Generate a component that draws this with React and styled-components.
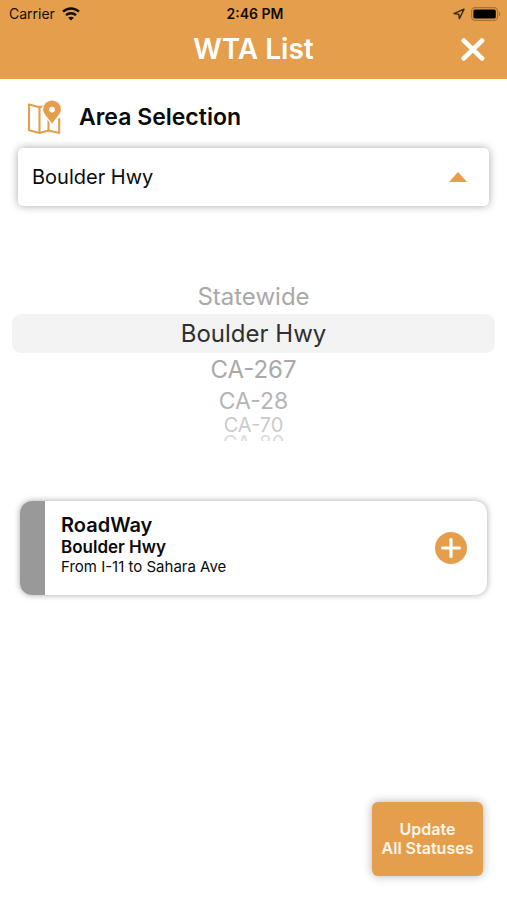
import React, { useState } from 'react';
import styled, { createGlobalStyle } from 'styled-components';

const areas = ['Statewide', 'Boulder Hwy', 'CA-267', 'CA-28', 'CA-70', 'CA-80'];

// how a wheel row looks, by its distance from the selected row
const wheelRows = {
  near: { height: 34, line: 34, size: 24, color: '#a9a9a9' },
  far: { height: 28, line: 28, size: 23, color: '#b4b4b4' },
  farther: { height: 20, line: 20, size: 20, color: '#cbcbcb' },
  // only the top of this row shows, it is rolling out of view
  edge: { height: 6, line: 16, size: 20, color: '#dcdcdc' },
};

const rowFor = (distance) => {
  if (distance <= 1) return wheelRows.near;
  if (distance === 2) return wheelRows.far;
  if (distance === 3) return wheelRows.farther;
  return wheelRows.edge;
};

function WifiIcon() {
  return (
    <svg width="18" height="14" viewBox="0 0 18 14" fill="none" stroke="#120c05" strokeWidth="2.4" aria-hidden="true">
      <path d="M1 4.7C5.6 0.4 12.4 0.4 17 4.7" />
      <path d="M4 8.2C6.8 5.5 11.2 5.5 14 8.2" />
      <path d="M9 13.6L6.2 10.8C7.8 9.3 10.2 9.3 11.8 10.8Z" fill="#120c05" stroke="none" />
    </svg>
  );
}

function LocationIcon() {
  return (
    <svg width="12" height="12" viewBox="0 0 12 12" fill="none" stroke="#3a270f" strokeWidth="1.4" strokeLinejoin="round" aria-hidden="true">
      <path d="M11 1.2L1 5.6L5.8 6.2L6.4 10.6Z" />
    </svg>
  );
}

function BatteryIcon() {
  return (
    <svg width="30" height="14" viewBox="0 0 30 14" aria-hidden="true">
      <rect x="0.6" y="0.6" width="26" height="12.8" rx="3.6" fill="none" stroke="#a5743a" strokeWidth="1.2" />
      <rect x="2.4" y="2.4" width="22.4" height="9.2" rx="1.6" fill="#000" />
      <path d="M28 4.6C29.8 5.4 29.8 8.6 28 9.4Z" fill="#a5743a" />
    </svg>
  );
}

function CloseIcon() {
  return (
    <svg width="26" height="24" viewBox="0 0 26 24" stroke="#fff" strokeWidth="4.8" strokeLinecap="round" aria-hidden="true">
      <path d="M3.8 3.6L22 21.4M22 3.6L3.8 21.4" />
    </svg>
  );
}

function MapIcon() {
  return (
    <svg width="36" height="36" viewBox="0 0 36 36" aria-hidden="true">
      <g fill="none" stroke="#e59f4c" strokeWidth="2.1" strokeLinejoin="round" strokeLinecap="round">
        <path d="M17 6L12.5 7.2L2 4.4V30.2L12.5 33L21.5 30.4L32.2 33V19" />
        <path d="M12.5 7.2V33" />
        <path d="M21.5 30.4V18" />
      </g>
      <path
        d="M25 -0.2A9.6 9.6 0 0 1 34.6 9.4C34.6 15 28.5 18.5 25 25C21.5 18.5 15.4 15 15.4 9.4A9.6 9.6 0 0 1 25 -0.2Z"
        fill="#e59f4c"
        stroke="#fff"
        strokeWidth="1.4"
      />
      <circle cx="25" cy="9.6" r="2.9" fill="#fff" />
    </svg>
  );
}

function AddIcon() {
  return (
    <svg width="32" height="32" viewBox="0 0 32 32" aria-hidden="true">
      <circle cx="16" cy="16" r="16" fill="#e59f4c" />
      <path d="M16 7.6V24.4M7.6 16H24.4" stroke="#fff" strokeWidth="3.2" strokeLinecap="round" />
    </svg>
  );
}

function App() {
  const [area, setArea] = useState('Boulder Hwy');
  const selected = areas.indexOf(area);

  return (
    <>
      <GlobalStyle />
      <Screen>
        <Header>
          <StatusBar>
            <Carrier>
              Carrier
              <WifiIcon />
            </Carrier>
            <Clock>2:46 PM</Clock>
            <Indicators>
              <LocationIcon />
              <BatteryIcon />
            </Indicators>
          </StatusBar>
          <TitleBar>
            <Title>WTA List</Title>
            <CloseButton type="button" aria-label="Close">
              <CloseIcon />
            </CloseButton>
          </TitleBar>
        </Header>

        <Main>
          <AreaLabel htmlFor="area">
            <MapIcon />
            Area Selection
          </AreaLabel>
          <SelectBox>
            <Select id="area" value={area} onChange={(e) => setArea(e.target.value)}>
              {areas.map((name) => (
                <option key={name}>{name}</option>
              ))}
            </Select>
            <Caret width="18" height="10" viewBox="0 0 18 10" aria-hidden="true">
              <path d="M0 10L9 0L18 10Z" fill="#e59f4c" />
            </Caret>
          </SelectBox>

          <Wheel>
            {areas.map((name, index) => (
              <WheelItem
                key={name}
                type="button"
                aria-pressed={index === selected}
                $selected={index === selected}
                $row={rowFor(Math.abs(index - selected))}
                onClick={() => setArea(name)}
              >
                {name}
              </WheelItem>
            ))}
          </Wheel>

          <Card>
            <CardStripe />
            <CardBody>
              <CardTitle>RoadWay</CardTitle>
              <CardRoad>Boulder Hwy</CardRoad>
              <CardRange>From I-11 to Sahara Ave</CardRange>
            </CardBody>
            <AddButton type="button" aria-label="Add">
              <AddIcon />
            </AddButton>
          </Card>
        </Main>

        <UpdateButton type="button">
          Update
          <br />
          All Statuses
        </UpdateButton>
      </Screen>
    </>
  );
}

const GlobalStyle = createGlobalStyle`
  * {
    box-sizing: border-box;
  }

  body {
    margin: 0;
    background-color: #fff;
    color: #0b0b0b;
    font-family: Inter, "Liberation Sans", sans-serif;
  }

  button,
  select {
    padding: 0;
    border: none;
    background: none;
    font-family: inherit;
    cursor: pointer;
  }

  svg {
    display: block;
    flex-shrink: 0;
  }
`;

const Screen = styled.div`
  display: flex;
  flex-direction: column;
  min-height: 100vh;
`;

const Header = styled.header`
  padding-bottom: 8px;
  background-color: #e59f4c;
`;

const StatusBar = styled.div`
  display: grid;
  grid-template-columns: 1fr auto 1fr;
  align-items: center;
  height: 27px;
  padding: 0 6px 0 9px;
  font-size: 14px;
  color: #120c05;
`;

const Carrier = styled.div`
  display: flex;
  align-items: center;
  gap: 7px;
`;

const Clock = styled.div`
  font-weight: 600;
`;

const Indicators = styled.div`
  display: flex;
  align-items: center;
  justify-content: flex-end;
  gap: 6px;
`;

const TitleBar = styled.div`
  display: grid;
  grid-template-columns: 1fr auto 1fr;
  align-items: center;
  height: 44px;
  padding: 0 21px;
`;

const Title = styled.h1`
  grid-column: 2;
  margin: 0;
  font-size: 28px;
  font-weight: 600;
  color: #fff;
`;

const CloseButton = styled.button`
  justify-self: end;
`;

const Main = styled.main`
  display: flex;
  flex-direction: column;
  padding: 20px 12px;
`;

const AreaLabel = styled.label`
  display: flex;
  align-items: center;
  gap: 16px;
  margin-bottom: 12px;
  padding-left: 15px;
  font-size: 23px;
  font-weight: 600;
  line-height: 37px;
`;

const SelectBox = styled.div`
  display: grid;
  align-items: center;
  height: 58px;
  margin: 0 6px;
  border-radius: 5px;
  background-color: #fff;
  box-shadow: 0 0 8px rgba(0, 0, 0, 0.35);
`;

const Select = styled.select`
  grid-area: 1 / 1;
  width: 100%;
  height: 100%;
  padding: 0 48px 0 14px;
  appearance: none;
  font-size: 20px;
  color: #0b0b0b;
`;

const Caret = styled.svg`
  grid-area: 1 / 1;
  justify-self: end;
  margin-right: 22px;
  pointer-events: none;
`;

const Wheel = styled.div`
  display: flex;
  flex-direction: column;
  margin: 74px 0 60px;
`;

const WheelItem = styled.button`
  display: flex;
  align-items: flex-start;
  justify-content: center;
  height: ${({ $selected, $row }) => ($selected ? 39 : $row.height)}px;
  border-radius: ${({ $selected }) => ($selected ? 9 : 0)}px;
  overflow: hidden;
  background-color: ${({ $selected }) => ($selected ? '#f3f3f3' : 'transparent')};
  font-size: ${({ $selected, $row }) => ($selected ? 24 : $row.size)}px;
  line-height: ${({ $selected, $row }) => ($selected ? 39 : $row.line)}px;
  color: ${({ $selected, $row }) => ($selected ? '#303030' : $row.color)};
`;

const Card = styled.article`
  display: flex;
  align-items: center;
  margin: 0 8px;
  border-radius: 12px;
  overflow: hidden;
  background-color: #fff;
  box-shadow: 0 0 6px rgba(0, 0, 0, 0.35);
`;

const CardStripe = styled.div`
  align-self: stretch;
  width: 25px;
  background-color: #999;
`;

const CardBody = styled.div`
  flex: 1;
  padding: 12px 16px 18px;
`;

const CardTitle = styled.h2`
  margin: 0;
  font-size: 20px;
  font-weight: 600;
  line-height: 24px;
`;

const CardRoad = styled.h3`
  margin: 0;
  font-size: 17px;
  font-weight: 600;
  line-height: 20px;
`;

const CardRange = styled.p`
  margin: 0;
  font-size: 15px;
  line-height: 20px;
`;

const AddButton = styled.button`
  margin-right: 20px;
`;

const UpdateButton = styled.button`
  align-self: flex-end;
  width: 111px;
  height: 74px;
  margin: auto 24px 24px;
  border-radius: 6px;
  background-color: #e59f4c;
  box-shadow: 0 0 10px rgba(0, 0, 0, 0.3);
  font-size: 16px;
  font-weight: 600;
  line-height: 19px;
  color: #fff6ea;
`;

export default App;
